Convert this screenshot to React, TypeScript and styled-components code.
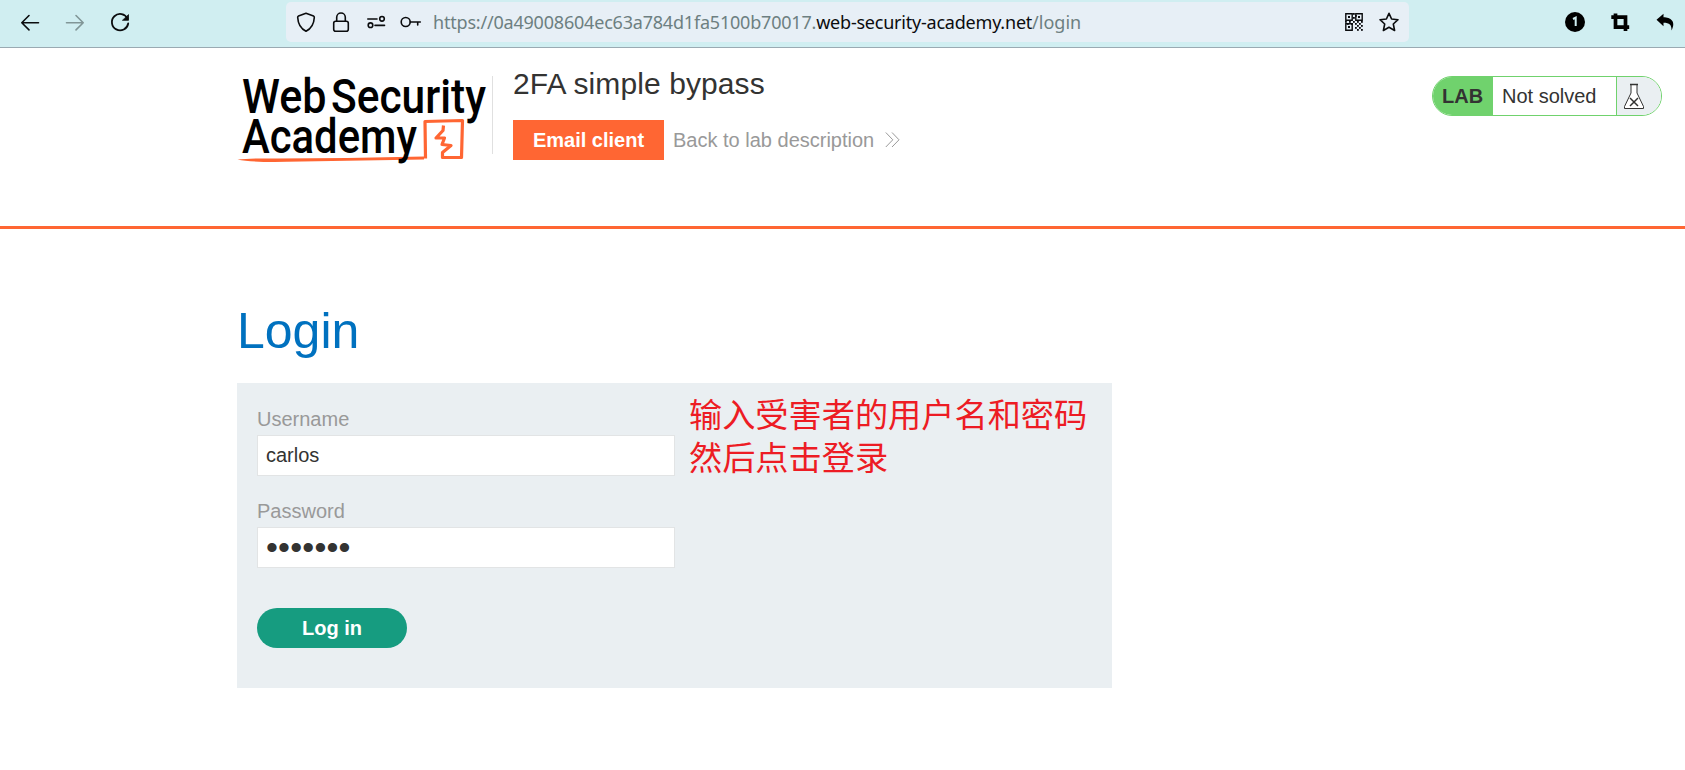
import React from "react";
import styled, { createGlobalStyle } from "styled-components";

const GlobalStyle = createGlobalStyle`
  * { box-sizing: border-box; }
  body {
    margin: 0;
    background: #fff;
    color: #333332;
    font: 20px/24px "Liberation Sans", Arial, sans-serif;
    overflow: hidden;
  }
`;

const Toolbar = styled.div`
  display: flex;
  align-items: flex-start;
  height: 48px;
  padding: 2px 0 0 18px;
  background: #d0eef1;
  border-bottom: 1px solid #9aaab2;
`;

const NavButtons = styled.div`
  display: flex;
  gap: 21px;
  width: 268px;
  padding-top: 8px;
`;

const AddressBar = styled.div`
  display: flex;
  align-items: center;
  width: 1123px;
  height: 40px;
  padding: 0 8px;
  border-radius: 5px;
  background: #e7eff6;
`;

const IconGroup = styled.div<{ $gap: number }>`
  display: flex;
  gap: ${(p) => p.$gap}px;
`;

const Url = styled.div`
  flex: 1;
  padding-left: 10px;
  color: #6d7f81;
  font: 18px/24px "Noto Sans", "Open Sans", sans-serif;
  white-space: nowrap;
`;

const UrlPart = styled.span<{ $strong?: boolean; $spacing: number }>`
  color: ${(p) => (p.$strong ? "#0b0c0e" : "inherit")};
  letter-spacing: ${(p) => p.$spacing}px;
`;

const Extensions = styled.div`
  display: flex;
  gap: 21px;
  padding: 8px 0 0 154px;
`;

const Glyph = styled.svg<{ $muted?: boolean }>`
  display: block;
  flex: none;
  width: 24px;
  height: 24px;
  fill: none;
  stroke: ${(p) => (p.$muted ? "#819697" : "#0b0c0e")};
  stroke-width: 1.6;
  stroke-linecap: round;
  stroke-linejoin: round;
`;

const Header = styled.header`
  display: flex;
  align-items: flex-start;
  height: 181px;
  padding: 28px 23px 0 237px;
  border-bottom: 3px solid #ff6633;
`;

const Logo = styled.svg`
  display: block;
  flex: none;
  width: 255px;
  height: 90px;
  overflow: visible;
  font: 500 49px Roboto, sans-serif;
`;

const TitleBlock = styled.div`
  flex: 1;
  display: flex;
  align-items: flex-start;
  &::before {
    content: "";
    width: 1px;
    height: 78px;
    margin-right: 20px;
    background: #e0e0e0;
  }
`;

const Title = styled.h2`
  margin: -9px 0 19px;
  font-size: 30px;
  line-height: 34px;
  font-weight: 400;
  letter-spacing: 0.1px;
`;

const Actions = styled.div`
  display: flex;
  align-items: center;
  gap: 9px;
`;

const EmailButton = styled.button`
  width: 151px;
  height: 40px;
  padding: 0;
  border: 0;
  background: #ff6633;
  color: #fff;
  font: 700 20px/24px "Liberation Sans", Arial, sans-serif;
`;

const BackLink = styled.a`
  display: flex;
  align-items: center;
  gap: 11px;
  color: #999;
`;

const Status = styled.div`
  display: flex;
  width: 230px;
  height: 40px;
  border: 1px solid #70d26d;
  border-radius: 20px;
  overflow: hidden;
  line-height: 38px;
`;

const StatusLabel = styled.div`
  width: 60px;
  padding-left: 9px;
  background: #70d26d;
  font-weight: 700;
`;

const StatusText = styled.div`
  flex: 1;
  padding-left: 9px;
`;

const StatusIcon = styled.div`
  width: 45px;
  padding: 6px 0 0 6px;
  border-left: 1px solid #70d26d;
  background: #eaeff2;
`;

const Main = styled.main`
  padding: 73px 0 0 237px;
`;

const Heading = styled.h1`
  margin: 0 0 23px;
  color: #0071bf;
  font-size: 50px;
  line-height: 58px;
  font-weight: 400;
`;

const Panel = styled.section`
  display: flex;
  align-items: flex-start;
  gap: 13px;
  width: 875px;
  height: 305px;
  padding: 12px 20px 0;
  background: #eaeff2;
`;

const Form = styled.form`
  width: 419px;
  padding-top: 12px;
`;

const Label = styled.label`
  display: block;
  color: #999;
  line-height: 24px;
`;

const Input = styled.input`
  display: block;
  width: 418px;
  height: 41px;
  margin: 4px 0 23px;
  padding: 0 8px;
  border: 1px solid #e2e4e5;
  border-radius: 0;
  outline: 0;
  background: #fff;
  color: #333332;
  font: 20px/24px "Liberation Sans", Arial, sans-serif;
`;

const PasswordInput = styled(Input)`
  padding: 0 8px;
  font-size: 34px;
  line-height: 38px;
  letter-spacing: 0.2px;
`;

const Submit = styled.button`
  width: 150px;
  height: 40px;
  margin-top: 17px;
  padding: 0;
  border: 0;
  border-radius: 20px;
  background: #169c80;
  color: #fff;
  font: 700 20px/24px "Liberation Sans", Arial, sans-serif;
`;

const Note = styled.p`
  margin: -4px 0 0;
  color: #ed1c24;
  font: 33.2px/43px "Noto Sans CJK SC", sans-serif;
  white-space: nowrap;
`;

const AcademyLogo = () => (
  <Logo viewBox="0 0 255 90">
    <text x="5" y="36.5" textLength="84.5" lengthAdjust="spacingAndGlyphs">Web</text>
    <text x="94" y="36.5" textLength="155" lengthAdjust="spacingAndGlyphs">Security</text>
    <path
      d="M188.5 82.5L188 45.5L225.5 44.5L224.5 81.500L205.500 81.500L205.500 76.500L214 69.500L205 68.500L207.500 62L199 62L206 54.500L206.500 49.500"
      fill="none"
      stroke="#ff6633"
      strokeWidth="3.2"
      strokeLinejoin="round"
    />
    <path fill="#ff6633" d="M0.5 83.5Q12 82 40 82.600L110 82L187 80.500V83.500L110 84.700L50 85.800Q15 86.500 0.500 83.500Z" />
    <text x="5" y="76.7" textLength="175" lengthAdjust="spacingAndGlyphs">Academy</text>
  </Logo>
);

const qrCells: number[][] = [
  [11, 3], [13, 5], [11, 7], [3, 11], [5, 13], [7, 11], [9, 13], [11, 11], [13, 13], [15, 11], [17, 13], [19, 11],
  [13, 17], [15, 15], [17, 17], [19, 15], [15, 19], [19, 19],
];

export default function App() {
  return (
    <>
      <GlobalStyle />
      <Toolbar>
        <NavButtons>
          <Glyph viewBox="0 0 24 24"><path d="M20.5 12.7H4M11 5.5L3.8 12.7L11 19.9" /></Glyph>
          <Glyph viewBox="0 0 24 24" $muted><path d="M3.5 12.7H20M13 5.5L20.2 12.7L13 19.9" /></Glyph>
          <Glyph viewBox="0 0 24 24">
            <path d="M19.5 8.6A8.2 8.2 0 1 0 20.2 13.5" strokeWidth="1.8" />
            <path d="M20.5 5V10.3H14.8Z" fill="#0b0c0e" strokeWidth="0.8" />
          </Glyph>
        </NavButtons>
        <AddressBar>
          <IconGroup $gap={11}>
            <Glyph viewBox="0 0 24 24"><path d="M12 3.2L19.5 5.9Q20.4 6.3 20.3 7.5C20 13.5 18.5 18 12 21.3C5.5 18 4 13.5 3.7 7.5Q3.6 6.3 4.5 5.9Z" /></Glyph>
            <Glyph viewBox="0 0 24 24"><rect x="4.7" y="11.3" width="14.6" height="10" rx="2" /><path d="M7.7 11V7.3A4.3 4.3 0 0 1 16.3 7.3V11" /></Glyph>
            <Glyph viewBox="0 0 24 24"><path d="M3.8 9H13M20.5 15.4H11" /><circle cx="18" cy="8.8" r="2.3" /><circle cx="6.5" cy="15.2" r="2.3" /></Glyph>
            <Glyph viewBox="0 0 24 24"><circle cx="6.7" cy="12" r="4.5" /><path d="M11.3 12H21.3M18.7 12V15" /></Glyph>
          </IconGroup>
          <Url>
            <UrlPart $spacing={-0.2}>https://0a49008604ec63a784d1fa5100b70017.</UrlPart>
            <UrlPart $spacing={-0.22} $strong>web-security-academy.net</UrlPart>
            <UrlPart $spacing={0}>/login</UrlPart>
          </Url>
          <IconGroup $gap={11}>
            <Glyph viewBox="0 0 24 24">
              <path d="M3.8 3.8h6.4v6.4h-6.4zM13.8 3.8h6.4v6.4h-6.4zM3.8 13.8h6.4v6.4h-6.4z" strokeLinejoin="miter" strokeWidth="1.4" />
              <g fill="#0b0c0e" stroke="none">
                <path d="M6 6h2v2h-2zM16 6h2v2h-2zM6 16h2v2h-2z" />
                {qrCells.map(([x, y]) => <rect key={`${x}-${y}`} x={x} y={y} width="1.8" height="1.8" />)}
              </g>
            </Glyph>
            <Glyph viewBox="0 0 24 24"><path d="M12 3.3L14.6 9L21 9.700L16.3 14L17.6 20.5L12 17.3L6.4 20.5L7.7 14L3 9.7L9.4 9Z" /></Glyph>
          </IconGroup>
        </AddressBar>
        <Extensions>
          <Glyph viewBox="0 0 24 24">
            <circle cx="12" cy="12" r="10" fill="#000" stroke="none" />
            <path d="M10 9L12.7 7.7V16" stroke="#d0eef1" strokeWidth="2" strokeLinecap="butt" strokeLinejoin="miter" />
          </Glyph>
          <Glyph viewBox="0 0 24 24"><path d="M3.3 7.2H17.5V21M7.5 3.5V17.2H21.2" stroke="#000" strokeWidth="3.7" strokeLinecap="butt" strokeLinejoin="miter" /></Glyph>
          <Glyph viewBox="0 0 24 24"><path d="M3.5 9.8L10.5 3.8V7.3C17.5 7.3 23.5 11.5 18.5 20.6C18.7 14.8 16.5 12.7 10.5 12.7V16.2Z" fill="#000" stroke="none" /></Glyph>
        </Extensions>
      </Toolbar>
      <Header>
        <AcademyLogo />
        <TitleBlock>
          <div>
            <Title>2FA simple bypass</Title>
            <Actions>
              <EmailButton>Email client</EmailButton>
              <BackLink>
                Back to lab description
                <svg width="16" height="16" viewBox="0 0 16 16" fill="none" stroke="#999" strokeWidth="1">
                  <path d="M0.8 0.5L7.8 7.8L0.8 15M7 0.5L14 7.8L7 15" />
                </svg>
              </BackLink>
            </Actions>
          </div>
        </TitleBlock>
        <Status>
          <StatusLabel>LAB</StatusLabel>
          <StatusText>Not solved</StatusText>
          <StatusIcon>
            <svg width="22" height="27" viewBox="0 0 22 27" fill="none" stroke="#333332" strokeWidth="1">
              <path d="M8 2V10L1.5 23.5V25.5H20.5V23.5L14 10V2" fill="#fff" />
              <path d="M7 1.5H15" strokeWidth="1.3" />
              <path d="M7 15L15 23M15 15L7 23" strokeWidth="1.5" />
            </svg>
          </StatusIcon>
        </Status>
      </Header>
      <Main>
        <Heading>Login</Heading>
        <Panel>
          <Form>
            <Label htmlFor="username">Username</Label>
            <Input id="username" defaultValue="carlos" />
            <Label htmlFor="password">Password</Label>
            <PasswordInput id="password" type="password" defaultValue="hunter7" />
            <Submit type="button">Log in</Submit>
          </Form>
          <Note>
            输入受害者的用户名和密码
            <br />
            然后点击登录
          </Note>
        </Panel>
      </Main>
    </>
  );
}
